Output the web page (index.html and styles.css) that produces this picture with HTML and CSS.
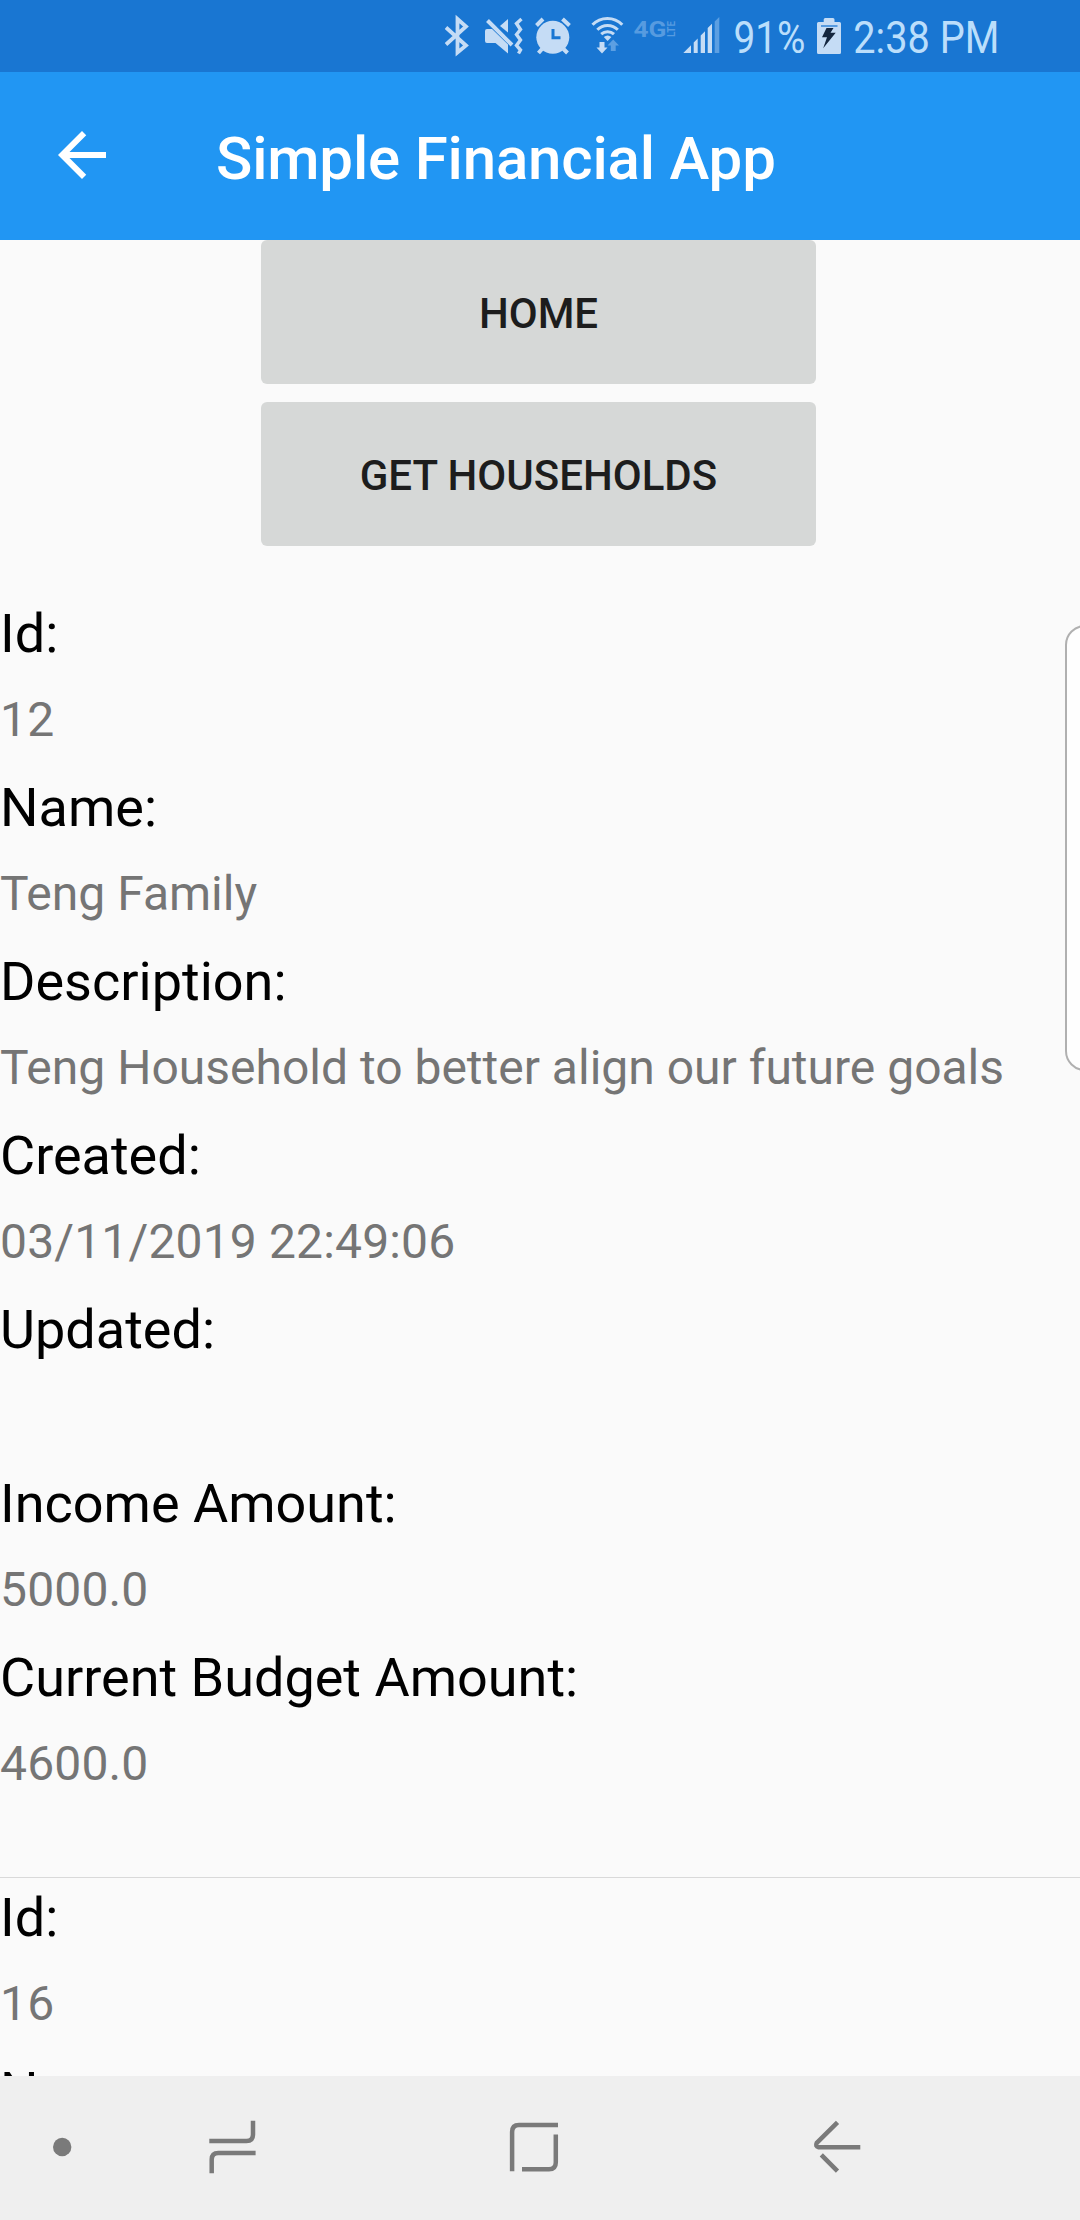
FILE: index.html
```
<!DOCTYPE html>
<html lang="en">
<head>
<meta charset="utf-8">
<title>Simple Financial App</title>
<link rel="stylesheet" href="styles.css">
</head>
<body>
<div class="screen">
  <div class="status-bar">
    <!-- bluetooth -->
    <svg width="36" height="72" viewBox="440 0 36 72"><path class="line" stroke-width="3.8" d="M446 27.5L466 45.5L457.5 52.5V19L466 26.5L446 44.5"/></svg>
    <!-- muted, vibrate -->
    <svg width="56" height="72" viewBox="476 0 56 72">
      <path class="solid" d="M487 29H492L508 44.500V53.500L495.500 43H487Q485 43 485 41V31Q485 29 487 29Z"/>
      <path class="solid" d="M508 19V32.500L500 26Z"/>
      <path class="line" stroke-width="4" d="M487.500 20.500L512 45"/>
      <path class="line" stroke-width="3.400" d="M521.500 19L516.500 23.500L520.500 29.500L516.500 34.500L520.500 40L516.500 45.500L520.500 50L518.500 53.500"/>
    </svg>
    <!-- alarm -->
    <svg width="44" height="72" viewBox="532 0 44 72">
      <circle class="solid" cx="552.800" cy="37.300" r="16.500"/>
      <path class="line" stroke-width="4" d="M536.500 25.500L543 19M562.500 19L569.500 25.500M542 49L538.500 53M563.500 49L567.500 53"/>
      <path class="cut" stroke-width="3" d="M553 29V37.700H560.500"/>
    </svg>
    <!-- wifi -->
    <svg width="52" height="72" viewBox="576 0 52 72">
      <path class="line" stroke-width="3" d="M592.500 24.800A20.500 20.500 0 0 1 622.300 24.800M597.300 29.800A14.500 14.500 0 0 1 617.800 29.800M601.200 34.200A9.500 9.500 0 0 1 614 34.200"/>
      <path class="solid" d="M603.800 37Q607.600 34 611.400 37L607.600 41Z"/>
      <path class="solid" d="M599.500 42H604.500V47.500H607.500L602 53.500L596.500 47.500H599.500Z"/>
      <path class="faint" d="M610.800 51V45.500H607.500L613.200 39.500L619 45.500H615.700V51Z"/>
    </svg>
    <svg width="52" height="72" viewBox="628 0 52 72">
      <text class="net" x="633.500" y="36.700" font-size="22" textLength="33" lengthAdjust="spacingAndGlyphs">4G</text>
      <text class="net" transform="translate(675 37) rotate(-90)" font-size="10.500" textLength="16" lengthAdjust="spacingAndGlyphs">LTE</text>
    </svg>
    <!-- signal -->
    <svg width="42" height="72" viewBox="680 0 42 72">
      <path class="solid" d="M683.300 53L691 45.300V53ZM693.700 42.500L697.700 38.500V53H693.700ZM700.700 35.500L705 31.300V53H700.700ZM707.700 28L712 23.800V53H707.700Z"/>
      <path class="faint" d="M714.700 21.500L719.300 17V53H714.700Z"/>
    </svg>
    <svg width="88" height="72" viewBox="722 0 88 72"><text class="stat" x="733.500" y="52.700" textLength="72" lengthAdjust="spacingAndGlyphs">91%</text></svg>
    <!-- battery, charging -->
    <svg width="40" height="72" viewBox="810 0 40 72">
      <path class="solid" d="M823.700 22V19.500Q823.700 18 825.200 18H833Q834.500 18 834.500 19.500V22H839.500Q841 22 841 23.500V52.500Q841 54 839.500 54H818.500Q817 54 817 52.500V23.500Q817 22 818.500 22Z"/>
      <path class="cut" stroke-width="1.300" d="M821 26H837.500"/>
      <path fill="#14263f" d="M826.500 28H833.500L830.500 32.700H835.700L823.200 48.300L827 37.300H822Z"/>
    </svg>
    <svg width="152" height="72" viewBox="850 0 152 72"><text class="stat" x="853.300" y="52.700" textLength="146" lengthAdjust="spacingAndGlyphs">2:38 PM</text></svg>
  </div>

  <header class="app-bar">
    <svg class="back" width="72" height="72" viewBox="0 0 24 24"><path fill="#fff" d="M20 11H7.830l5.590-5.590L12 4l-8 8 8 8 1.410-1.410L7.830 13H20v-2z"/></svg>
    <h1 class="title">Simple Financial App</h1>
  </header>

  <main class="content">
    <div class="actions">
      <button class="btn">HOME</button>
      <button class="btn">GET HOUSEHOLDS</button>
    </div>
    <dl class="household">
      <dt>Id:</dt><dd class="num">12</dd>
      <dt>Name:</dt><dd>Teng Family</dd>
      <dt>Description:</dt><dd>Teng Household to better align our future goals</dd>
      <dt>Created:</dt><dd class="num">03/11/2019 22:49:06</dd>
      <dt>Updated:</dt><dd></dd>
      <dt>Income Amount:</dt><dd class="num">5000.0</dd>
      <dt>Current Budget Amount:</dt><dd class="num">4600.0</dd>
    </dl>
    <dl class="household">
      <dt>Id:</dt><dd class="num">16</dd>
      <dt>Name:</dt><dd></dd>
    </dl>
  </main>

  <nav class="nav-bar">
    <svg width="144" height="144" viewBox="0 2076 144 144"><circle cx="62.200" cy="2147" r="9.200" fill="#7a7a7a"/></svg>
    <svg width="216" height="144" viewBox="144 2076 216 144"><path class="nav-line" d="M209.300 2141H246.500Q253 2141 253 2134.500V2120.800M255.600 2153H218.300Q211.700 2153 211.700 2159.500V2173.300"/></svg>
    <svg width="360" height="144" viewBox="360 2076 360 144"><path class="nav-line" d="M512.100 2171.300V2132Q512.100 2125 519 2125H558M555.800 2134.500V2162.500Q555.800 2169.200 549 2169.200H522"/></svg>
    <svg width="360" height="144" viewBox="720 2076 360 144"><path class="nav-line" d="M860.300 2147.200H818.500Q815 2146.500 816.800 2142.800L837.500 2122.300M821.300 2154.800L837.500 2171.200"/></svg>
  </nav>
  <div class="edge-handle"></div>
</div>
</body>
</html>
```
FILE: styles.css
```
* { box-sizing: border-box; }

body {
  margin: 0;
  font-family: Roboto, "Noto Sans", sans-serif;
  background: #fafafa;
}

.screen {
  position: relative;
  display: flex;
  flex-direction: column;
  width: 1080px;
  height: 2220px;
  overflow: hidden;
}

svg { display: block; flex: none; overflow: visible; }

.status-bar {
  display: flex;
  flex: none;
  justify-content: flex-end;
  height: 72px;
  padding-right: 78px;
  background: #1976d2;
}

.solid { fill: #c5dcf5; }
.line { fill: none; stroke: #c5dcf5; }
.cut { fill: none; stroke: #1976d2; }
.faint { fill: #5c9fe2; }
.stat { font-size: 45px; fill: #bbdefb; }
.net { font-family: Roboto, sans-serif; font-weight: 700; fill: #569be0; }

.app-bar {
  display: flex;
  flex: none;
  align-items: center;
  gap: 98px;
  height: 168px;
  padding-left: 46px;
  background: #2196f3;
}

.back { margin-bottom: 2px; }

.title {
  margin: 0;
  padding-top: 5px;
  font-size: 60px;
  font-weight: 500;
  line-height: 72px;
  letter-spacing: -0.18px;
  color: #fff;
}

.content {
  flex: 1;
  min-height: 0;
  overflow: hidden;
}

.actions {
  display: flex;
  flex-direction: column;
  gap: 18px;
  width: 555px;
  margin: 0 0 48px 261px;
}

.btn {
  height: 144px;
  padding: 2px 0 0;
  border: 0;
  border-radius: 6px;
  background: #d6d8d7;
  color: #1d1d1d;
  font: 500 42px Roboto, sans-serif;
}

.household {
  margin: 0;
  padding-bottom: 65px;
}

.household + .household { border-top: 1px solid #d9d9d9; }

.household dt {
  font-size: 54px;
  line-height: 80px;
  color: #000;
}

.household dd {
  height: 64px;
  margin: 14px 0 16px;
  font-size: 48px;
  line-height: 64px;
  color: #757575;
  white-space: nowrap;
}

.household .num { letter-spacing: 0.15px; }

.nav-bar {
  display: flex;
  flex: none;
  height: 144px;
  background: #efefef;
}

.nav-line { fill: none; stroke: #7a7a7a; stroke-width: 4.5; }

.edge-handle {
  position: absolute;
  top: 625px;
  right: -10px;
  width: 25px;
  height: 446px;
  border: 2px solid #b0b0b0;
  border-radius: 20px 0 0 20px;
  background: #fefefe;
}
```
